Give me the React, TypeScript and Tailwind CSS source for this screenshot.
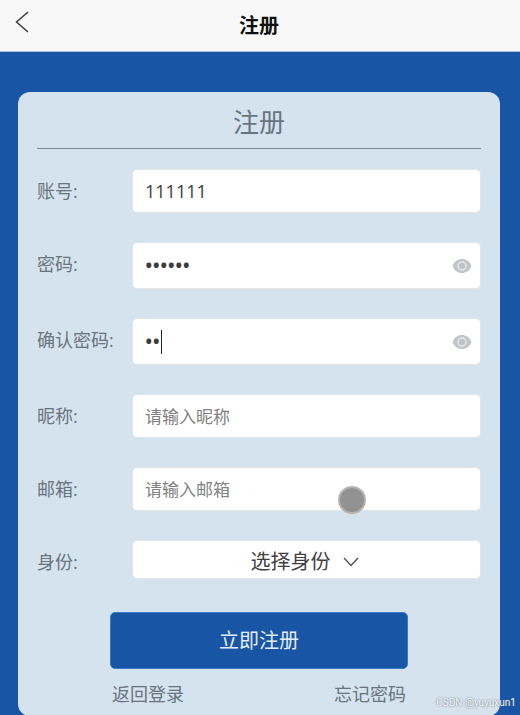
import React, { useState } from "react";

function EyeIcon() {
  return (
    <svg viewBox="0 0 20 16" className="h-4 w-5" aria-hidden="true">
      <path d="M.5 8C2.500 3 6 1 10 1s7.500 2 9.500 7c-2 5-5.500 7-9.500 7S2.500 13 .5 8Z" fill="#c1c5c9" />
      <circle cx="10" cy="8" r="4" fill="#bfc3c7" stroke="#e8eaec" strokeWidth="1.400" />
    </svg>
  );
}

type RowProps = { id: string; label: string; children: React.ReactNode };

function Row({ id, label, children }: RowProps) {
  return (
    <div className="flex items-start">
      <label htmlFor={id} className="w-[95px] shrink-0 text-[18px] leading-[44px] whitespace-nowrap text-[#69747c]">
        {label}
      </label>
      <div className="relative min-w-0 flex-1 rounded-[5px] border border-[#e2e5e8] bg-white">{children}</div>
    </div>
  );
}

const inputClass =
  "block w-full bg-transparent px-3 text-[#3c3c3c] outline-none placeholder:text-[#808080]";

function PasswordRow({ id, label, initial, caret }: { id: string; label: string; initial: string; caret?: boolean }) {
  const [value, setValue] = useState(initial);
  const [visible, setVisible] = useState(false);
  return (
    <Row id={id} label={label}>
      <input
        id={id}
        type={visible ? "text" : "password"}
        value={value}
        onChange={(e) => setValue(e.target.value)}
        className={`${inputClass} h-[45px] text-[20px] font-semibold`}
      />
      {caret && <span className="absolute top-[11px] left-7 h-6 w-px bg-[#222222]" />}
      <button
        type="button"
        aria-label="显示密码"
        onClick={() => setVisible(!visible)}
        className="absolute inset-y-0 right-2 flex items-center"
      >
        <EyeIcon />
      </button>
    </Row>
  );
}

export default function App() {
  const [account, setAccount] = useState("111111");
  return (
    <div className="relative flex h-screen flex-col overflow-hidden bg-[#1955a5] font-['Open_Sans','Noto_Sans_CJK_SC',sans-serif]">
      <header className="relative flex h-[52px] shrink-0 items-center justify-center border-b border-[#a9c3de] bg-[#f8f8f8] pr-[2px]">
        <button type="button" aria-label="返回" className="absolute top-[10px] left-[14px]">
          <svg viewBox="0 0 16 24" className="h-6 w-4" fill="none" stroke="#3c3c3c" strokeWidth="1.500" aria-hidden="true">
            <path d="M14 2 2.500 12 14 22" />
          </svg>
        </button>
        <h1 className="text-[20px] leading-6 font-bold text-[#111111]">注册</h1>
      </header>

      <main className="pt-10 pr-5 pl-[18px]">
        <form className="rounded-xl bg-[#d5e3ef] px-[19px] pb-2" onSubmit={(e) => e.preventDefault()}>
          <h2 className="border-b border-[#7d8790] pt-3 pb-2 text-center text-[26px] leading-9 text-[#66757f]">注册</h2>

          <div className="flex flex-col gap-[29px] pt-5">
            <Row id="account" label="账号:">
              <input
                id="account"
                value={account}
                onChange={(e) => setAccount(e.target.value)}
                className={`${inputClass} h-[42px] text-[18px]`}
              />
            </Row>
            <PasswordRow id="password" label="密码:" initial="111111" />
            <PasswordRow id="confirm" label="确认密码:" initial="11" caret />
            <Row id="nickname" label="昵称:">
              <input id="nickname" placeholder="请输入昵称" className={`${inputClass} h-[42px] text-[17px]`} />
            </Row>
            <Row id="email" label="邮箱:">
              <input id="email" type="email" placeholder="请输入邮箱" className={`${inputClass} h-[42px] text-[17px]`} />
              <span className="absolute top-[18px] right-[114px] size-7 rounded-full border-2 border-[#b4b4b4] bg-[#929292]" />
            </Row>
            <Row id="role" label="身份:">
              <div className="flex h-[37px] items-center justify-center gap-3 pt-1 pr-1">
                <select id="role" className="appearance-none bg-transparent text-[20px] leading-7 text-[#404040] outline-none">
                  <option>选择身份</option>
                </select>
                <svg viewBox="0 0 16 10" className="h-[10px] w-4" fill="none" stroke="#505050" strokeWidth="1.400" aria-hidden="true">
                  <path d="m1 1 7 7.500L15 1" />
                </svg>
              </div>
            </Row>
          </div>

          <div className="mx-[73px] mt-7">
            <button
              type="submit"
              className="block h-[57px] w-full rounded-[5px] border border-[#3a78c8] bg-[#1955a5] text-[20px] text-[#e3edf8]"
            >
              立即注册
            </button>
            <div className="mt-[11px] flex justify-between px-[2px] text-[18px] leading-7 text-[#69747c]">
              <a href="#login">返回登录</a>
              <a href="#forgot">忘记密码</a>
            </div>
          </div>
        </form>
      </main>

      <span className="absolute right-1 bottom-1 font-[Roboto,sans-serif] text-[10px] leading-4 text-[#f2f5f8] [text-shadow:0_0_2px_#5a6470]">
        CSDN @yuyuxun1
      </span>
    </div>
  );
}
